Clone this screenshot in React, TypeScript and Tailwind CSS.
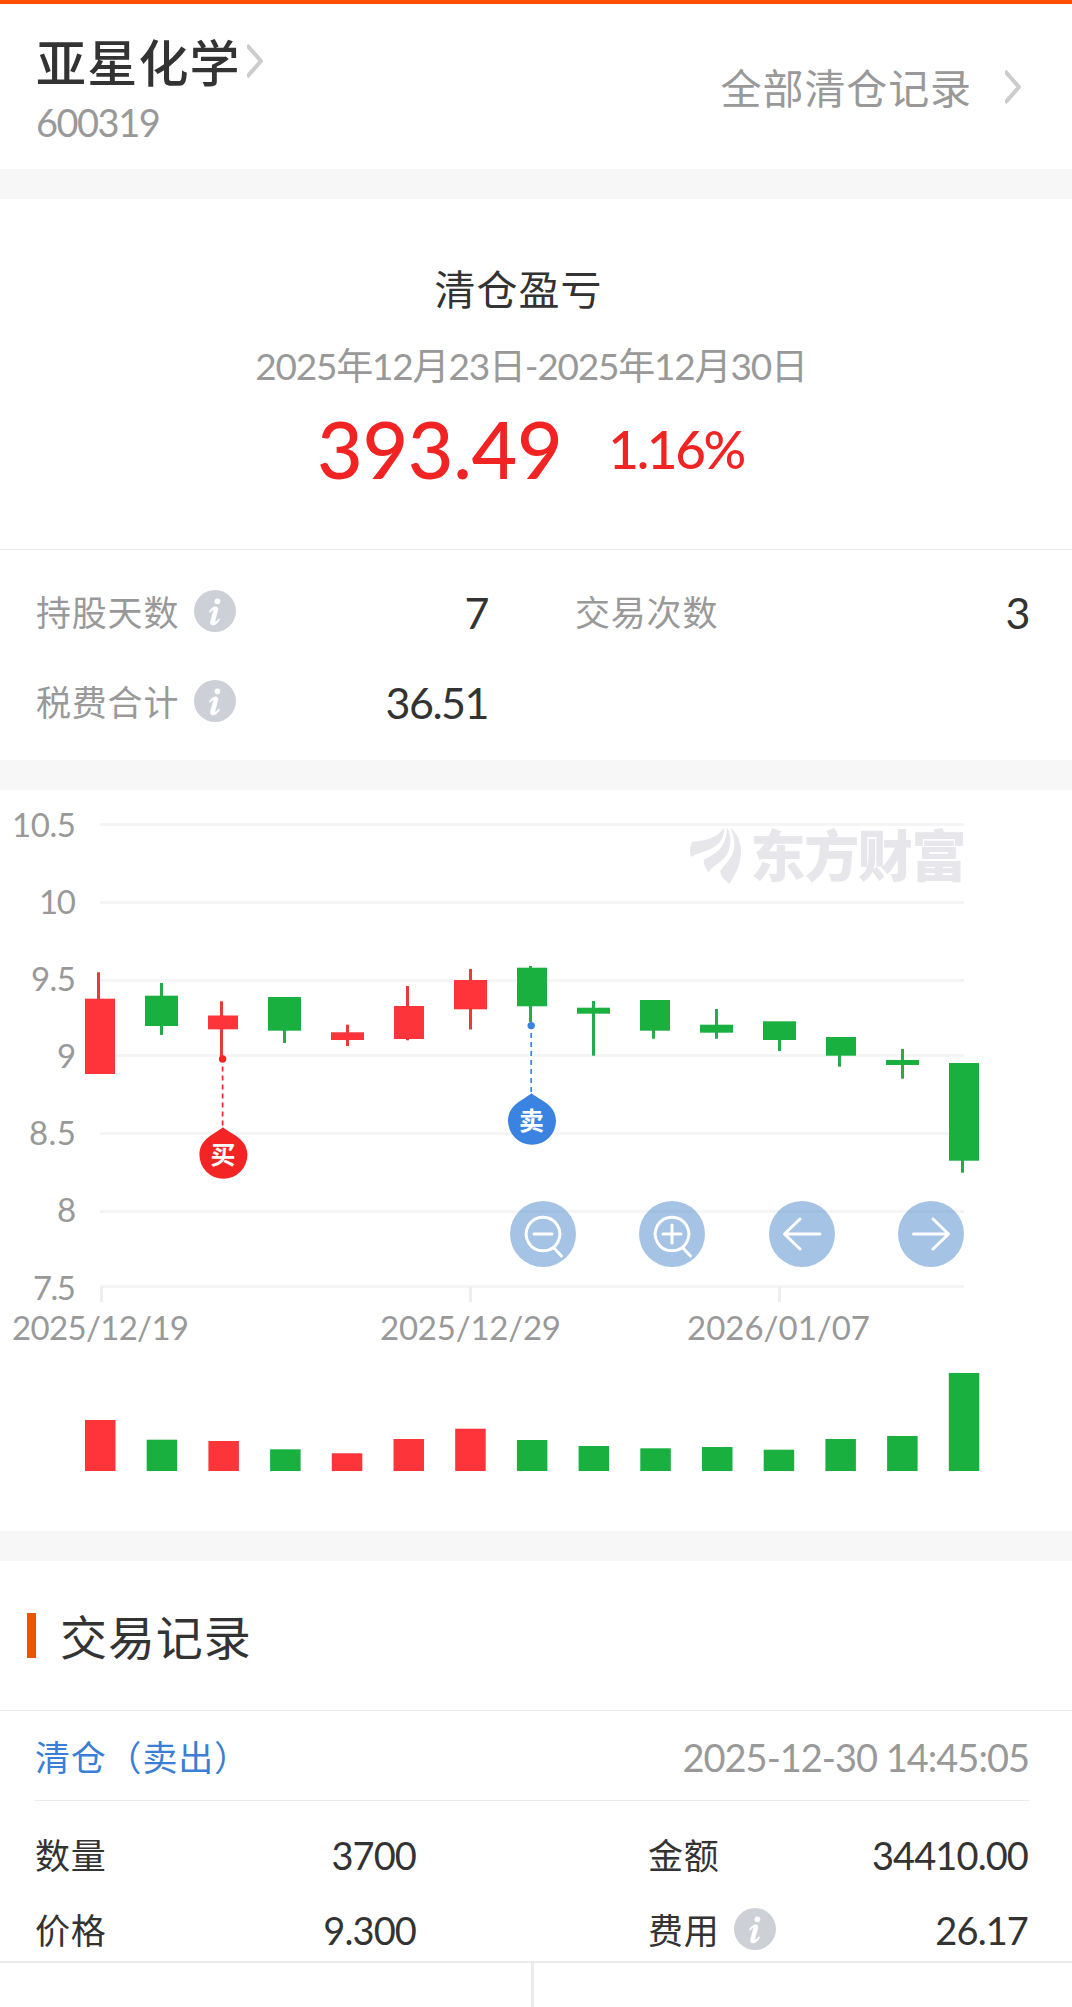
import clsx from "clsx";

const UP = "#fd3439";
const DOWN = "#1ab040";

interface Candle {
  up: boolean;
  body: [number, number, number, number]; // left, right, top, bottom
  wick: [number, number, number]; // left, top, bottom
  vol: number;
}

const candles: Candle[] = [
  { up: true, body: [85, 115, 998.7, 1074], wick: [97, 972.3, 1000], vol: 1420 },
  { up: false, body: [145, 178, 995.7, 1026], wick: [160, 983, 1035], vol: 1439.7 },
  { up: true, body: [208, 238, 1015.5, 1029.3], wick: [220, 1001.3, 1057], vol: 1441 },
  { up: false, body: [268, 301, 997, 1030.7], wick: [283, 1010, 1043], vol: 1449.3 },
  { up: true, body: [331, 364, 1032.3, 1040], wick: [346, 1024.7, 1046], vol: 1453.3 },
  { up: true, body: [394, 424, 1006, 1039], wick: [406, 986, 1040.3], vol: 1439 },
  { up: true, body: [454, 487, 980, 1009.3], wick: [469, 969, 1029.5], vol: 1428.7 },
  { up: false, body: [517, 547, 967.7, 1006.3], wick: [529, 966, 1022], vol: 1440 },
  { up: false, body: [577, 610, 1007.7, 1013.7], wick: [592, 1001, 1055.7], vol: 1446 },
  { up: false, body: [640, 670, 1000, 1030.7], wick: [652, 1010, 1038.7], vol: 1448.3 },
  { up: false, body: [700, 733, 1024.7, 1032.7], wick: [715, 1009, 1038.7], vol: 1447 },
  { up: false, body: [763, 796, 1021.3, 1040], wick: [778, 1030, 1051], vol: 1449.7 },
  { up: false, body: [826, 856, 1037, 1055.7], wick: [838, 1040, 1066.7], vol: 1439 },
  { up: false, body: [886, 919, 1060, 1065], wick: [901, 1049, 1078.7], vol: 1436 },
  { up: false, body: [949, 979, 1063, 1160.7], wick: [961, 1100, 1172.7], vol: 1373 },
];

const yAxis = [
  { label: "10.5", line: 824.5, base: 837, width: 64 },
  { label: "10", line: 902.5, base: 914, width: 37 },
  { label: "9.5", line: 980.5, base: 991, width: 45 },
  { label: "9", line: 1055.5, base: 1068, width: 19 },
  { label: "8.5", line: 1133.5, base: 1145, width: 47 },
  { label: "8", line: 1211.5, base: 1222, width: 19 },
  { label: "7.5", line: 1286.5, base: 1300, width: 43 },
];

const xAxis = [
  { label: "2025/12/19", tick: 100, x: 12, width: 177 },
  { label: "2025/12/29", tick: 469, x: 380, width: 181 },
  { label: "2026/01/07", tick: 778, x: 687, width: 183 },
];

const Gap = () => <div className="h-[30px] bg-[#f7f7f7]" />;

const Chevron = ({ className }: { className?: string }) => (
  <svg viewBox="0 0 16 34" className={clsx("h-[34px] w-4", className)} fill="none" stroke="#cccccc" strokeWidth="4">
    <path d="M0 1.2 L14 17 L0 32.8" strokeLinejoin="round" />
  </svg>
);

const Info = ({ className }: { className?: string }) => (
  <svg viewBox="0 0 42 42" className={clsx("h-[42px] w-[42px]", className)}>
    <circle cx="21" cy="21" r="21" fill="#cdd0d6" />
    <circle cx="23.4" cy="11.3" r="2.9" fill="#fff" />
    <path
      d="M15.3 21.8 C17 18.6 19.4 16.8 21.6 16.8 C23.8 16.8 24.3 18.4 23.7 20.6 L21 30.2 C20.6 31.8 21.3 32.2 22.3 31.5 C23.3 30.8 24.2 29.8 25 28.8 L25.6 29.4 C24 32.8 21.4 35 18.9 35 C16.6 35 16 33.2 16.7 30.9 L19.3 21.4 C19.8 19.8 19.2 19.5 18.3 20.1 C17.4 20.7 16.8 21.5 16.1 22.4 Z"
      fill="#fff"
      stroke="#fff"
      strokeWidth="0.6"
    />
  </svg>
);

const Marker = ({ x, cy, dot, color, label }: { x: number; cy: number; dot: number; color: string; label: string }) => (
  <g>
    <circle cx={x - 0.8} cy={dot} r="3.7" fill={color} />
    <path d={`M${x - 0.8} ${dot + 7.5} V${cy - 28}`} stroke={color} strokeWidth="1.7" strokeDasharray="5 4" />
    <path
      d={`M${x - 0.5} ${cy - 27.5} C${x + 5} ${cy - 22} ${x + 24} ${cy - 17} ${x + 24} ${cy} A24 24 0 0 1 ${x - 24} ${cy} C${x - 24} ${cy - 17} ${x - 6} ${cy - 22} ${x - 0.5} ${cy - 27.5} Z`}
      fill={color}
    />
    <text x={x - 0.5} y={cy + 9.5} textAnchor="middle" fontSize="25" fontWeight="700" fill="#fff">
      {label}
    </text>
  </g>
);

const KLineChart = () => (
  <svg viewBox="0 790 1072 741" className="block h-[741px] w-full">
    {yAxis.map((t) => (
      <g key={t.label}>
        <rect x="100" y={t.line - 1.5} width="864" height="3" fill="#f5f5f5" />
        <text x={76 - t.width} y={t.base - 0.3} fontSize="33" textLength={t.width} fill="#999999">
          {t.label}
        </text>
      </g>
    ))}
    {xAxis.map((t) => (
      <g key={t.label}>
        <rect x={t.tick} y="1287" width="3" height="15" fill="#eeeeee" />
        <text x={t.x} y="1340" fontSize="33" textLength={t.width} fill="#999999">
          {t.label}
        </text>
      </g>
    ))}

    <g fill="#e6e6eb">
      <g transform="translate(680 815) scale(0.3333)">
        <path d="M33 126 C28 105 30 90 38 80 C80 76 110 70 132 38 C134 60 125 82 103 95 C75 112 50 113 33 126 Z" />
        <path d="M141 37 C155 60 155 95 140 120 C125 142 100 150 86 172 C78 160 70 148 71 134 C110 118 140 95 141 37 Z" />
        <path d="M152 38 C175 60 183 85 183 110 C183 150 165 180 148 206 C132 195 122 182 121 168 C140 140 165 125 163 85 C162 65 157 50 152 38 Z" />
      </g>
      <text x="750.5" y="875.5" fontSize="55" fontWeight="900" textLength="216">
        东方财富
      </text>
    </g>

    {candles.map(({ up, body: [l, r, t, b], wick: [x, hi, lo], vol }, i) => (
      <g key={i} fill={up ? UP : DOWN}>
        <rect x={x} y={hi} width="3" height={lo - hi} fill={up ? "#e8393d" : "#27ab4a"} />
        <rect x={l} y={t} width={r - l} height={b - t} />
        <rect x={85 + i * 61.7} y={vol} width="30.5" height={1471 - vol} />
      </g>
    ))}

    <Marker x={223.4} cy={1154.8} dot={1059} color="#f22424" label="买" />
    <Marker x={532} cy={1120.8} dot={1025.6} color="#3a83e0" label="卖" />
  </svg>
);

const toolIcons = [
  "M33 16.2 a16.8 16.8 0 1 0 0.01 0 M24 33 H42 M43.5 46.5 L51.5 55",
  "M33 16.2 a16.8 16.8 0 1 0 0.01 0 M24 33 H42 M33 24 V42 M43.5 46.5 L51.5 55",
  "M51 33 H15.5 M31 18 L15.5 33 L31 48",
  "M15.5 33 H50.5 M35 18 L50.5 33 L35 48",
];

const ChartTools = () => (
  <div className="absolute left-[510px] top-[411px] flex w-[454px] justify-between">
    {toolIcons.map((d) => (
      <button key={d} className="h-[66px] w-[66px] rounded-full bg-[#4b87c9]/50">
        <svg viewBox="0 0 66 66" fill="none" stroke="#fff" strokeWidth="3" strokeLinecap="round" strokeLinejoin="round">
          <path d={d} />
        </svg>
      </button>
    ))}
  </div>
);

const Stat = ({ name, value, info }: { name: string; value: string; info?: boolean }) => (
  <div className="flex h-[90px] items-center">
    <span className="text-[35px] tracking-[0.8px] text-[#999999]">{name}</span>
    {info && <Info className="relative -top-px ml-[15px]" />}
    <span className="ml-auto pr-px text-[43px] tracking-[-1.5px]">{value}</span>
  </div>
);

const Detail = ({ name, value, info }: { name: string; value: string; info?: boolean }) => (
  <div className="flex h-[75px] items-center">
    <span className="text-[35px] tracking-[0.8px]">{name}</span>
    {info && <Info className="relative -top-[2px] ml-[14px]" />}
    <span className="relative -top-px ml-auto pr-px text-[38px] tracking-[-0.9px]">{value}</span>
  </div>
);

export default function App() {
  return (
    <div className="relative h-[2007px] w-[1072px] overflow-hidden bg-white font-['Lato','Noto_Sans_CJK_SC',sans-serif] leading-none text-[#333333]">
      <div className="h-1 bg-[#ff5000]" />
      <header className="flex h-[165px] justify-between pl-9">
        <div className="pt-[29px]">
          <div className="flex h-[60px] items-center">
            <h1 className="text-[50px] font-medium tracking-[1.2px]">亚星化学</h1>
            <Chevron className="relative -top-[2px] ml-[6px]" />
          </div>
          <div className="flex h-[58px] items-center text-[38px] tracking-[-1.5px] text-[#999999]">600319</div>
        </div>
        <div className="flex items-center pr-[51px] pt-[3px]">
          <span className="text-[41px] tracking-[0.9px] text-[#999999]">全部清仓记录</span>
          <Chevron className="relative -top-px ml-[33px]" />
        </div>
      </header>
      <Gap />

      <section className="h-[351px] border-b border-[#ebebeb] pt-[60px]">
        <div className="flex h-[60px] items-center justify-center pr-[35px] text-[41px] tracking-[1px]">清仓盈亏</div>
        <div className="mt-4 flex h-[60px] items-center justify-center pr-[10px] text-[37px] tracking-[-1.2px] text-[#999999]">
          2025年12月23日-2025年12月30日
        </div>
        <div className="mt-[13px] flex h-20 items-center pl-[317px] text-[#f12323]">
          <span className="text-[79px] font-medium tracking-[-0.4px]">393.49</span>
          <span className="ml-[46px] pt-px text-[53px] font-medium tracking-[-2.4px]">1.16%</span>
        </div>
      </section>
      <section className="grid h-[210px] grid-cols-[453px_455px] content-start gap-x-[86px] pl-9 pt-[17px]">
        <Stat name="持股天数" value="7" info />
        <Stat name="交易次数" value="3" />
        <Stat name="税费合计" value="36.51" info />
      </section>
      <Gap />

      <section className="relative">
        <KLineChart />
        <ChartTools />
      </section>
      <Gap />

      <section>
        <div className="flex h-[149px] items-center pl-[27px]">
          <div className="h-[45px] w-[9px] bg-[#ea5504]" />
          <h2 className="ml-[24px] mt-[3px] text-[47px] tracking-[0.9px]">交易记录</h2>
        </div>
        <div className="border-t border-[#ebebeb] pl-[35px] pr-[43px]">
          <div className="flex h-[90px] items-center justify-between border-b border-[#ebebeb] pt-[3px]">
            <span className="text-[35px] tracking-[0.8px] text-[#3a7fd5]">清仓（卖出）</span>
            <span className="text-[38px] tracking-[-1px] text-[#999999]">2025-12-30 14:45:05</span>
          </div>
          <div className="grid grid-cols-[382px_381px] gap-x-[231px] pt-[17px]">
            <Detail name="数量" value="3700" />
            <Detail name="金额" value="34410.00" />
            <Detail name="价格" value="9.300" />
            <Detail name="费用" value="26.17" info />
          </div>
        </div>
      </section>

      {/* bottom bar stays over the record list */}
      <footer className="absolute inset-x-0 bottom-0 flex h-[46px] border-t-2 border-[#ebebeb] bg-white">
        <div className="w-[534px] border-r-[3px] border-[#ebebeb]" />
      </footer>
    </div>
  );
}
